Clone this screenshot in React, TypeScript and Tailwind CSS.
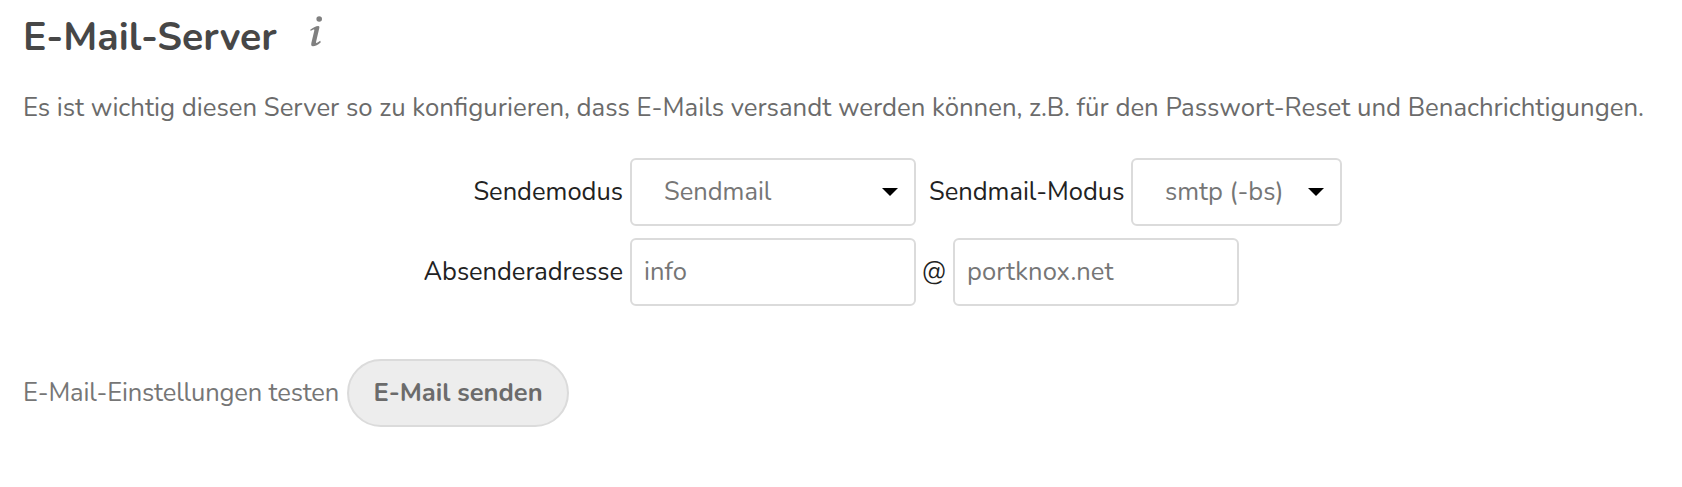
import type { ReactNode } from "react";

function Caret() {
  return (
    <svg viewBox="0 0 16 8" className="h-2 w-4 shrink-0" aria-hidden="true">
      <path d="M0 0H16L8 8Z" fill="#000" />
    </svg>
  );
}

function Select({ children, className }: { children: ReactNode; className: string }) {
  return (
    <button
      type="button"
      className={`flex h-[68px] items-center justify-between rounded-md border-2 border-[#dbdbdb] bg-white pl-8 pr-4 text-[#767676] ${className}`}
    >
      <span>{children}</span>
      <Caret />
    </button>
  );
}

function Field({ label, value, className }: { label: string; value: string; className: string }) {
  return (
    <input
      aria-label={label}
      defaultValue={value}
      className={`h-[68px] w-[286px] rounded-md border-2 border-[#dbdbdb] bg-white px-3 pb-0.5 tracking-[0.08px] text-[#767676] outline-none ${className}`}
    />
  );
}

export default function App() {
  return (
    <main className="h-[487px] w-[1682px] overflow-hidden bg-white pl-[23px] pt-3 font-['Nunito','Lato',sans-serif] text-[25.5px] leading-[36px] text-[#6b6b6b]">
      <div className="flex h-[50px] items-center">
        <h2 className="w-[286px] whitespace-nowrap text-[39.2px] font-bold leading-[50px] text-[#474747]">E-Mail-Server</h2>
        <svg viewBox="0 0 16 16" className="-mt-2.5 -ml-[9px] h-8 w-8" fill="#808080" aria-hidden="true">
          <path d="M9.6 0.1a1.4 1.4 0 1 1 0 2.8a1.4 1.4 0 0 1 0-2.8ZM5.1 6.9C6.1 6.1 8.1 5 9.1 5C9.8 5 9.8 5.6 9.6 6.3L8.1 12.6C8 13.2 8 13.5 8.2 13.5C8.5 13.5 9.3 13 10.1 12.4L10.4 13.1C9.2 14.3 7.5 15.1 6.5 15.1C5.5 15.1 5.5 14.4 5.7 13.4L7.1 7.5C7.2 7.1 7.2 6.8 6.9 6.8C6.6 6.8 6 7.1 5.4 7.5Z" />
        </svg>
      </div>

      <p className="mt-7 whitespace-nowrap text-[25.75px]">
        Es ist wichtig diesen Server so zu konfigurieren, dass E-Mails versandt werden können, z.B. für den Passwort-Reset und Benachrichtigungen.
      </p>

      <div className="mt-8 flex flex-col gap-3 text-[#222]">
        <div className="flex items-center">
          <span className="w-[600px] text-right">Sendemodus</span>
          <Select className="ml-[7px] w-[286px]">Sendmail</Select>
          <span className="ml-[13px] w-[195px] whitespace-nowrap">Sendmail-Modus</span>
          <Select className="ml-[7px] w-[211px]">smtp (-bs)</Select>
        </div>
        <div className="flex items-center">
          <span className="w-[600px] text-right tracking-[-0.05px]">Absenderadresse</span>
          <Field label="Absender" value="info" className="ml-[7px]" />
          <span className="w-[37px] pr-px text-center">@</span>
          <Field label="Domain" value="portknox.net" className="" />
        </div>
      </div>

      <div className="mt-[53px] flex items-center">
        <span className="w-[324px] whitespace-nowrap tracking-[-0.13px] text-[#767676]">E-Mail-Einstellungen testen</span>
        <button type="button" className="h-[68px] w-[222px] whitespace-nowrap rounded-full border-2 border-[#dbdbdb] bg-[#ededed] text-center font-bold">
          E-Mail senden
        </button>
      </div>
    </main>
  );
}
